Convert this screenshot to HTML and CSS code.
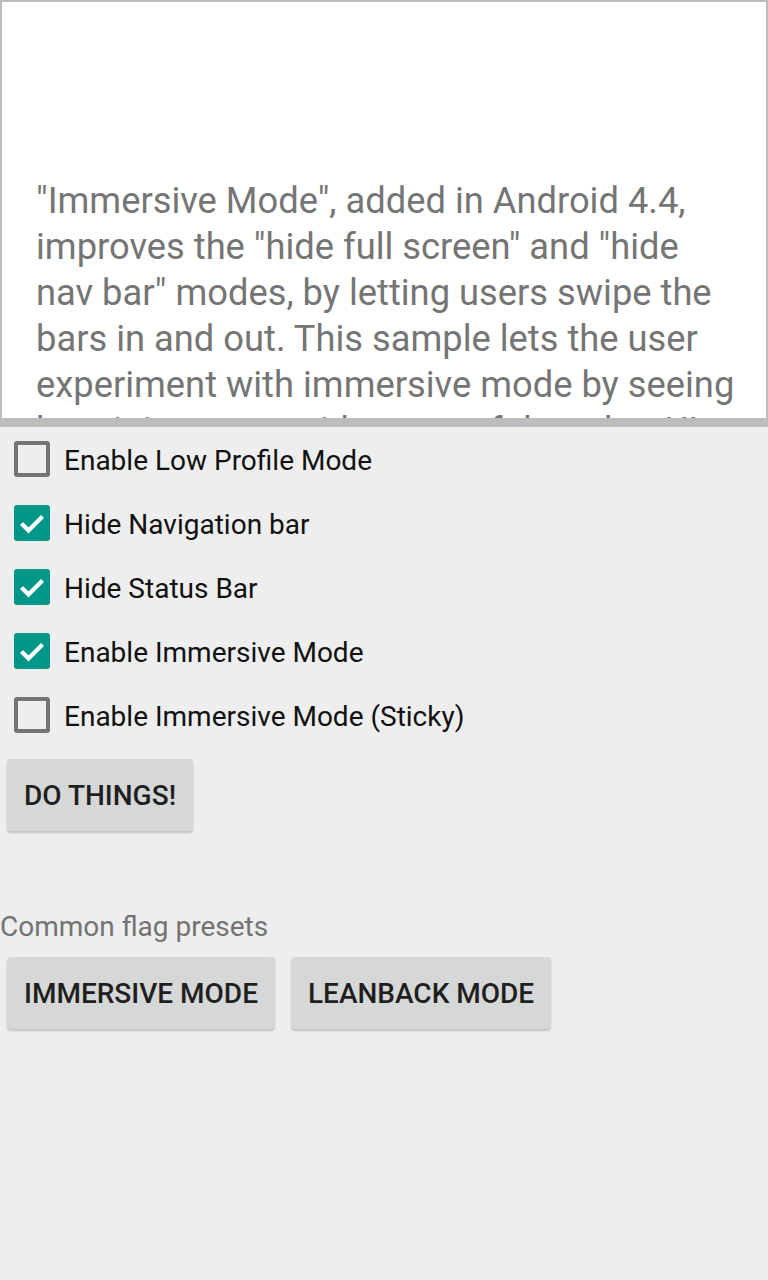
FILE: index.html
```html
<!DOCTYPE html>
<html>
<head>
<meta charset="utf-8">
<link rel="stylesheet" href="styles.css">
</head>
<body>
<div class="screen">
  <div class="panel">
    <p class="intro">"Immersive Mode", added in Android 4.4, improves the "hide full screen" and "hide nav bar" modes, by letting users swipe the bars in and out. This sample lets the user experiment with immersive mode by seeing how it interacts with some of the other UI flags related to full-screen apps.</p>
  </div>
  <div class="options">
    <label class="row"><span class="box"></span><span class="lbl">Enable Low Profile Mode</span></label>
    <label class="row"><span class="box on"><svg viewBox="0 0 36 36" width="36" height="36"><path d="M7.5 18.5 L14.5 25.5 L28.5 11.5" fill="none" stroke="#fff" stroke-width="4.2"/></svg></span><span class="lbl">Hide Navigation bar</span></label>
    <label class="row"><span class="box on"><svg viewBox="0 0 36 36" width="36" height="36"><path d="M7.5 18.5 L14.5 25.5 L28.5 11.5" fill="none" stroke="#fff" stroke-width="4.2"/></svg></span><span class="lbl">Hide Status Bar</span></label>
    <label class="row"><span class="box on"><svg viewBox="0 0 36 36" width="36" height="36"><path d="M7.5 18.5 L14.5 25.5 L28.5 11.5" fill="none" stroke="#fff" stroke-width="4.2"/></svg></span><span class="lbl">Enable Immersive Mode</span></label>
    <label class="row"><span class="box"></span><span class="lbl">Enable Immersive Mode (Sticky)</span></label>
  </div>
  <div class="btnrow first">
    <button class="btn">DO THINGS!</button>
  </div>
  <div class="caption">Common flag presets</div>
  <div class="btnrow">
    <button class="btn">IMMERSIVE MODE</button>
    <button class="btn">LEANBACK MODE</button>
  </div>
</div>
</body>
</html>
```
FILE: styles.css
```css
html, body {
  margin: 0;
  padding: 0;
  background: #eeeeee;
}
.screen {
  width: 768px;
  height: 1280px;
  overflow: hidden;
  font-family: Roboto, "Noto Sans", sans-serif;
  background: #eeeeee;
}
.panel {
  box-sizing: border-box;
  height: 427px;
  background: #ffffff;
  border: 2px solid #bdbdbd;
  border-bottom-width: 9px;
  overflow: hidden;
  padding: 176px 28px 0 34px;
}
.intro {
  margin: 0;
  font-size: 36.3px;
  line-height: 46px;
  color: #757575;
}
.options {
  display: flex;
  flex-direction: column;
}
.row {
  height: 64px;
  display: flex;
  align-items: center;
  gap: 14px;
  padding-left: 14px;
}
.box {
  box-sizing: border-box;
  width: 36px;
  height: 36px;
  border: 4px solid #757575;
  border-radius: 3px;
  display: flex;
  align-items: center;
  justify-content: center;
}
.box.on {
  border: none;
  background: #009688;
}
.box svg {
  display: block;
}
.lbl {
  font-size: 28px;
  color: #111111;
  padding-top: 3px;
}
.btnrow {
  display: flex;
  gap: 16px;
  padding-left: 7px;
}
.btnrow.first {
  margin-top: 12px;
}
.btn {
  height: 72px;
  padding: 0 17px;
  border: none;
  border-radius: 4px;
  background: #d6d7d7;
  box-shadow: 0 2px 2px rgba(0,0,0,0.18);
  font-family: Roboto, "Noto Sans", sans-serif;
  font-weight: 500;
  font-size: 28px;
  color: #1f1f1f;
}
.caption {
  margin-top: 79px;
  font-size: 28px;
  line-height: 34px;
  color: #737373;
  margin-bottom: 13px;
}
```
